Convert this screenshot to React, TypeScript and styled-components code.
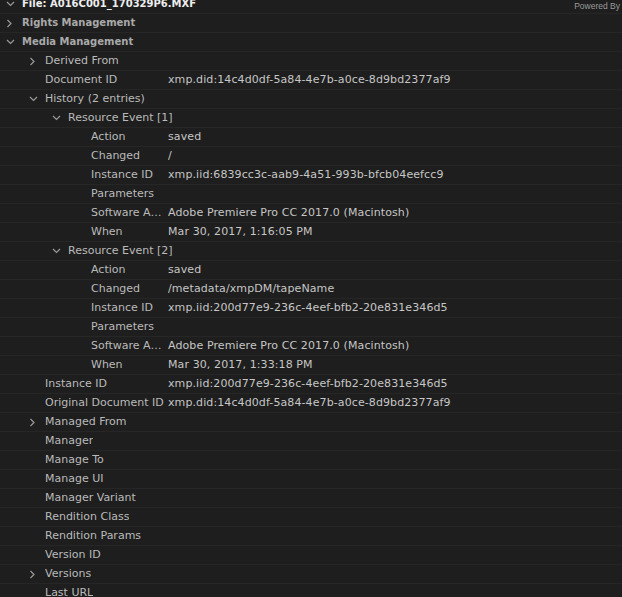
import React from 'react';
import styled, { createGlobalStyle } from 'styled-components';

const GlobalStyle = createGlobalStyle`
  html, body {
    margin: 0;
    padding: 0;
    background: #1e1e1e;
    overflow: hidden;
  }
  body {
    font-family: "DejaVu Sans", "Liberation Sans", sans-serif;
  }
`;

type Twist = 'open' | 'closed' | 'none';

interface Node {
  depth: number;
  label: string;
  value?: string;
  twist?: Twist;
}

const rows: Node[] = [
  { depth: 1, label: 'Derived From', twist: 'closed' },
  { depth: 1, label: 'Document ID', value: 'xmp.did:14c4d0df-5a84-4e7b-a0ce-8d9bd2377af9' },
  { depth: 1, label: 'History (2 entries)', twist: 'open' },
  { depth: 2, label: 'Resource Event [1]', twist: 'open' },
  { depth: 3, label: 'Action', value: 'saved' },
  { depth: 3, label: 'Changed', value: '/' },
  { depth: 3, label: 'Instance ID', value: 'xmp.iid:6839cc3c-aab9-4a51-993b-bfcb04eefcc9' },
  { depth: 3, label: 'Parameters' },
  { depth: 3, label: 'Software Agent', value: 'Adobe Premiere Pro CC 2017.0 (Macintosh)' },
  { depth: 3, label: 'When', value: 'Mar 30, 2017, 1:16:05 PM' },
  { depth: 2, label: 'Resource Event [2]', twist: 'open' },
  { depth: 3, label: 'Action', value: 'saved' },
  { depth: 3, label: 'Changed', value: '/metadata/xmpDM/tapeName' },
  { depth: 3, label: 'Instance ID', value: 'xmp.iid:200d77e9-236c-4eef-bfb2-20e831e346d5' },
  { depth: 3, label: 'Parameters' },
  { depth: 3, label: 'Software Agent', value: 'Adobe Premiere Pro CC 2017.0 (Macintosh)' },
  { depth: 3, label: 'When', value: 'Mar 30, 2017, 1:33:18 PM' },
  { depth: 1, label: 'Instance ID', value: 'xmp.iid:200d77e9-236c-4eef-bfb2-20e831e346d5' },
  { depth: 1, label: 'Original Document ID', value: 'xmp.did:14c4d0df-5a84-4e7b-a0ce-8d9bd2377af9' },
  { depth: 1, label: 'Managed From', twist: 'closed' },
  { depth: 1, label: 'Manager' },
  { depth: 1, label: 'Manage To' },
  { depth: 1, label: 'Manage UI' },
  { depth: 1, label: 'Manager Variant' },
  { depth: 1, label: 'Rendition Class' },
  { depth: 1, label: 'Rendition Params' },
  { depth: 1, label: 'Version ID' },
  { depth: 1, label: 'Versions', twist: 'closed' },
  { depth: 1, label: 'Last URL' },
];

const Panel = styled.div`
  width: 622px;
  height: 597px;
  overflow: hidden;
  background: #1e1e1e;
`;

const List = styled.div`
  margin-top: -5px;
  display: flex;
  flex-direction: column;
`;

const Row = styled.div`
  display: grid;
  grid-template-columns: 168px 1fr;
  align-items: center;
  height: 19px;
  box-sizing: border-box;
  border-bottom: 1px solid #262626;
  font-size: 11px;
  line-height: 18px;
`;

const HeadRow = styled.div`
  display: flex;
  align-items: center;
  height: 19px;
  box-sizing: border-box;
  border-bottom: 1px solid #262626;
  font-size: 10px;
  line-height: 18px;
`;

const NameCell = styled.div<{ $depth: number; $span: boolean }>`
  display: flex;
  align-items: center;
  min-width: 0;
  grid-column: ${(p) => (p.$span ? '1 / span 2' : 'auto')};
  padding-left: ${(p) => p.$depth * 23}px;
  padding-right: 4px;
`;

const Twisty = styled.span`
  flex: 0 0 22px;
  width: 22px;
  height: 18px;
  display: flex;
  align-items: center;
  padding-left: 6px;
  box-sizing: border-box;
`;

const Label = styled.span`
  color: #bababa;
  white-space: nowrap;
  overflow: hidden;
  text-overflow: ellipsis;
  min-width: 0;
`;

const HeadLabel = styled.span<{ $bright?: boolean }>`
  color: ${(p) => (p.$bright ? '#ededed' : '#a9a9a9')};
  font-weight: bold;
  white-space: nowrap;
`;

const Value = styled.span`
  color: #c6c6c6;
  white-space: nowrap;
  overflow: hidden;
  letter-spacing: 0.1px;
`;

const Powered = styled.span`
  margin-left: auto;
  margin-right: 2px;
  margin-top: 4px;
  font-family: "Liberation Sans", sans-serif;
  font-size: 8.5px;
  color: #9a9a9a;
`;

const Chevron = ({ twist }: { twist: Twist }) => {
  if (twist === 'none') return null;
  if (twist === 'open') {
    return (
      <svg width="9" height="6" viewBox="0 0 9 6">
        <polyline points="1,1 4.5,4.5 8,1" fill="none" stroke="#9a9a9a" strokeWidth="1.2" />
      </svg>
    );
  }
  return (
    <svg width="6" height="9" viewBox="0 0 6 9">
      <polyline points="1.5,1 5,4.5 1.5,8" fill="none" stroke="#9a9a9a" strokeWidth="1.2" />
    </svg>
  );
};

export default function App() {
  return (
    <Panel>
      <GlobalStyle />
      <List>
        <HeadRow>
          <Twisty>
            <Chevron twist="open" />
          </Twisty>
          <HeadLabel $bright>File: A016C001_170329P6.MXF</HeadLabel>
          <Powered>Powered By</Powered>
        </HeadRow>
        <HeadRow>
          <Twisty>
            <Chevron twist="closed" />
          </Twisty>
          <HeadLabel>Rights Management</HeadLabel>
        </HeadRow>
        <HeadRow>
          <Twisty>
            <Chevron twist="open" />
          </Twisty>
          <HeadLabel>Media Management</HeadLabel>
        </HeadRow>
        {rows.map((r, i) => {
          const span = !r.value && r.twist !== undefined && r.twist !== 'none';
          return (
            <Row key={i}>
              <NameCell $depth={r.depth} $span={span}>
                <Twisty>
                  <Chevron twist={r.twist ?? 'none'} />
                </Twisty>
                <Label>{r.label}</Label>
              </NameCell>
              {!span && <Value>{r.value}</Value>}
            </Row>
          );
        })}
      </List>
    </Panel>
  );
}
